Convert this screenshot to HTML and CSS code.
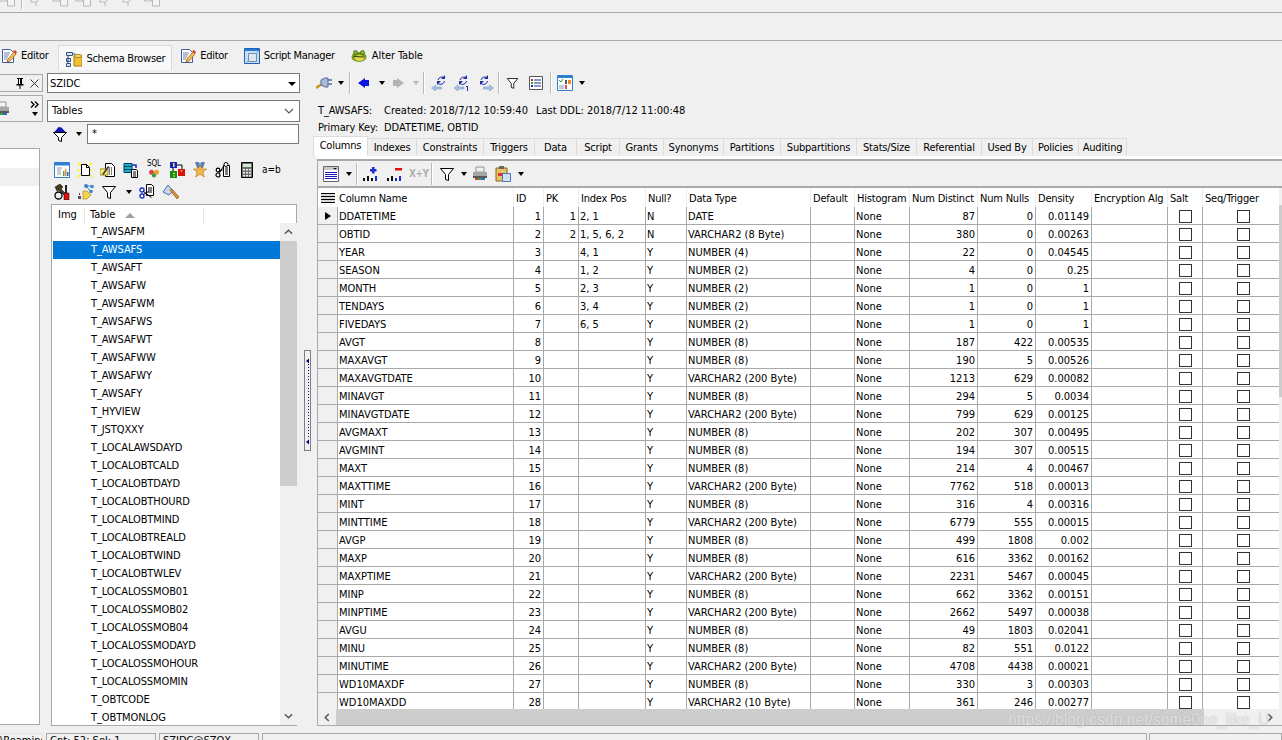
FILE: index.html
```html
<!DOCTYPE html>
<html lang="en">
<head>
<meta charset="utf-8">
<title>Schema Browser</title>
<link rel="stylesheet" href="styles.css">
</head>
<body>
<svg class="defs" xmlns="http://www.w3.org/2000/svg">
<symbol id="i-editor" viewBox="0 0 16 16"><path d="M1.500 1.500h8l3 3v10h-11z" fill="#fff" stroke="#3b5f9e"/><path d="M3 5h6M3 7h5M3 9h4M3 11h3" stroke="#6b7fb0"/><path d="M6 14l1-3 6-7 2 2-6 7z" fill="#f6c544" stroke="#a3542a" stroke-width=".8"/><path d="M12 3l2-1 2 2-1 2z" fill="#d8433c"/></symbol>
<symbol id="i-schema" viewBox="0 0 16 16"><path d="M.5 1.500h6v3h-6zM.5 7.500h4v3h-4zM.5 12.500h4v3h-4z" fill="#dce6f5" stroke="#34507f"/><path d="M6.500 3h3M2 4.500v8" stroke="#34507f" fill="none"/><path d="M8 5h8v10h-8z" fill="#f3c233" stroke="#a67d12"/><ellipse cx="12" cy="5" rx="4" ry="1.500" fill="#fbe58a" stroke="#a67d12"/></symbol>
<symbol id="i-script" viewBox="0 0 16 16"><path d="M.5.5h15v15h-15z" fill="#c9ddf2" stroke="#1d62b5"/><path d="M1 1h14v2h-14z" fill="#2b7bd2"/><path d="M4.500 5.500h8v8h-8z" fill="#dfe8f2" stroke="#6f8fb3"/><path d="M2.500 14.500l2-2M12.500 5.500l2-2" stroke="#6f8fb3"/></symbol>
<symbol id="i-toad" viewBox="0 0 16 16"><ellipse cx="8" cy="9" rx="7.500" ry="5" fill="#6f9a1e"/><ellipse cx="8.500" cy="10" rx="5" ry="3" fill="#e4d84c"/><circle cx="4.500" cy="4.500" r="2" fill="#8bb52a" stroke="#3d5b0f" stroke-width=".7"/><circle cx="11.500" cy="4.500" r="2" fill="#8bb52a" stroke="#3d5b0f" stroke-width=".7"/><path d="M3 8.500l10 .5" stroke="#2c430a"/></symbol>
<symbol id="i-print" viewBox="0 0 16 16"><path d="M4 1h8v5h-8z" fill="#f4f4f4" stroke="#8f8f8f"/><path d="M1 6h14v6h-14z" fill="#a6a6a6"/><path d="M1 10h14v2h-14z" fill="#595959"/><path d="M3 12h3v2h-3z" fill="#d33"/><path d="M6 12h3v2h-3z" fill="#3a3"/><path d="M9 12h4v2h-4z" fill="#36c"/></symbol>
<symbol id="i-pin" viewBox="0 0 8 11"><path d="M1 0h6v1h-1v5h1.500v1.500h-3v3.500h-1v-3.500h-3v-1.500h1.500v-5h-1z" fill="#000"/><path d="M3 1h1v5h-1z" fill="#fff"/></symbol>
<symbol id="i-close" viewBox="0 0 9 9"><path d="M.5.5l8 8M8.500.5l-8 8" stroke="#333"/></symbol>
<symbol id="i-chev2" viewBox="0 0 9 7"><path d="M1 .5l3 3-3 3M5 .5l3 3-3 3" fill="none" stroke="#000" stroke-width="1.300"/></symbol>
<symbol id="i-funnel" viewBox="0 0 16 16"><path d="M1.500 2.500h13l-5 6v6l-3-1v-5z" fill="#fff" stroke="#000"/></symbol>
<symbol id="i-funnelblue" viewBox="0 0 16 16"><path d="M1.500 6.500h13l-5 5v4l-3-1v-3z" fill="#fff" stroke="#000"/><path d="M2.500 6l4-5 3 .5 4 4.500z" fill="#1118b8"/></symbol>
<symbol id="i-chart" viewBox="0 0 16 16"><path d="M.5.5h15v15h-15z" fill="#fff" stroke="#2f7fd0"/><path d="M1 1h14v2.500h-14z" fill="#2f7fd0"/><path d="M3 6h5M3 8h4M3 10h4M3 12h4" stroke="#99a"/><path d="M9 9h1.500v5h-1.500z" fill="#4a4"/><path d="M11 7h1.500v7h-1.500z" fill="#e84"/><path d="M13 10h1.500v4h-1.500z" fill="#26c"/></symbol>
<symbol id="i-newdoc" viewBox="0 0 16 16"><path d="M1 1l2.500 2.500M15 1l-2.500 2.500M1 15l2.500-2.500M15 15l-2.500-2.500M0 8h2.500M16 8h-2.500M8 0v1" stroke="#fff200" stroke-width="1.500"/><path d="M4.500 2.500h5l3 3v8h-8z" fill="#fff" stroke="#000"/><path d="M9.500 2.500v3h3" fill="none" stroke="#000"/></symbol>
<symbol id="i-pendoc" viewBox="0 0 16 16"><path d="M5.500 1.500h6l3 3v10h-9z" fill="#fff" stroke="#000"/><path d="M7 6h6M7 8h6M7 10h6M7 12h6" stroke="#000" stroke-dasharray="1 1"/><path d="M0 7h8v6h-8z" fill="#fbef70" stroke="#9a8b1b"/><path d="M2 12l6-8 1.500 1-6 8z" fill="#444"/></symbol>
<symbol id="i-dbdoc" viewBox="0 0 16 16"><path d="M1 1.500h8v9h-8z" fill="#18b6c4" stroke="#053a66"/><path d="M1 4.500h8M1 7.500h8" stroke="#053a66"/><path d="M8.500 7.500h5l1 1v7h-6z" fill="#fff" stroke="#000"/><path d="M10 10h3M10 12h3M10 14h3" stroke="#000"/><path d="M9 3h4v3" fill="none" stroke="#1928b0" stroke-width="1.500"/></symbol>
<symbol id="i-sql" viewBox="0 0 16 12"><circle cx="5" cy="5" r="3" fill="#d44"/><circle cx="11" cy="5" r="3" fill="#e2a52d"/><circle cx="8" cy="9" r="2.500" fill="#3a9d3a"/></symbol>
<symbol id="i-blocks" viewBox="0 0 16 16"><path d="M1 0h7v6h-7z" fill="#1424c4"/><path d="M9 7h7v7h-7z" fill="#d81010"/><path d="M1 9h7v7h-7z" fill="#169016"/><path d="M8 3h5v4M4 6v3" fill="none" stroke="#000"/><path d="M4 1h1.500v4h-1.500zM11.500 8.500h2v1h-2zM4 11h2v1h-2zM4 13.500h2v1h-2z" fill="#ffe94a"/></symbol>
<symbol id="i-star" viewBox="0 0 16 16"><path d="M3 0h4l1 3 1-3h4l-2 6h-6z" fill="#5c7fb5"/><path d="M8 3l1.800 4h4.700l-3.700 3 1.400 5-4.200-3-4.200 3 1.400-5-3.700-3h4.700z" fill="#f5b648" stroke="#c27c18" stroke-width=".7"/></symbol>
<symbol id="i-scissdoc" viewBox="0 0 16 16"><path d="M8.500 3.500h6v11h-6z" fill="#fff" stroke="#000"/><path d="M10 6h3M10 8h3M10 10h3M10 12h3" stroke="#000"/><circle cx="3" cy="13" r="2" fill="#fff" stroke="#000" stroke-width="1.200"/><circle cx="3" cy="8" r="1.800" fill="#fff" stroke="#000" stroke-width="1.200"/><path d="M4 11.500l5-8M4.500 9l3-1" stroke="#000"/><circle cx="11" cy="2.500" r="2" fill="#fff" stroke="#000"/></symbol>
<symbol id="i-scissblue" viewBox="0 0 16 16"><path d="M7.500 .5h5l2 2v9h-7z" fill="#fff" stroke="#000"/><path d="M9 4h4M9 6h4M9 8h4" stroke="#000"/><circle cx="3" cy="6" r="2" fill="#fff" stroke="#1a2fd0" stroke-width="1.400"/><circle cx="3" cy="12" r="2" fill="#fff" stroke="#1a2fd0" stroke-width="1.400"/><path d="M4.500 7.500l8 6M4.500 10.500l5-3" stroke="#000"/></symbol>
<symbol id="i-calc" viewBox="0 0 12 16"><path d="M.5.500h11v15h-11z" fill="#6e6e6e" stroke="#000"/><path d="M2 2h8v3h-8z" fill="#cfe8cf"/><path d="M2 7h2v1.500h-2zM5 7h2v1.500h-2zM8 7h2v1.500h-2zM2 10h2v1.500h-2zM5 10h2v1.500h-2zM8 10h2v1.500h-2zM2 13h2v1.500h-2zM5 13h2v1.500h-2zM8 13h2v1.500h-2z" fill="#eee"/></symbol>
<symbol id="i-hammer" viewBox="0 0 16 16"><path d="M1 3l5-3 3 3-2 2 7 7h-3l-6-6-2 1z" fill="#4a3a1a" stroke="#000" stroke-width=".5"/><path d="M11 1h2v8h-2z" fill="#222"/><path d="M10 9h5v7h-5z" fill="#e01010" stroke="#000" stroke-width=".5"/><circle cx="4.500" cy="11.500" r="3.500" fill="none" stroke="#000" stroke-width="1.300"/></symbol>
<symbol id="i-net" viewBox="0 0 16 16"><path d="M5 7h4l4 4-4 4h-4z" fill="#f4d24a" stroke="#9a8010" stroke-width=".6"/><circle cx="8" cy="2" r="2" fill="#3c84c9"/><circle cx="14" cy="2.500" r="1.800" fill="#3c84c9"/><circle cx="13" cy="7.500" r="1.800" fill="#3c84c9"/><path d="M8 2h6M9 3l3 4" stroke="#3c84c9"/><path d="M1 9h1v2h-1zM0 12h3v3h-3z" fill="#555"/></symbol>
<symbol id="i-axe" viewBox="0 0 18 16"><path d="M1 8l5-7 5 6-4 4z" fill="#c5d6ee" stroke="#4f6fa8"/><path d="M8 6l2-1 7 8-2 2z" fill="#d8903a" stroke="#7d4a10" stroke-width=".6"/></symbol>
<symbol id="i-plug" viewBox="0 0 16 16"><path d="M0 13l6-4" stroke="#c99a1a" stroke-width="2.500"/><path d="M5 5l4-2h3v9h-3l-4-2z" fill="#a8bcd8" stroke="#4f6c9b"/><path d="M12 5h4M12 9h4" stroke="#4f6c9b" stroke-width="1.500"/></symbol>
<symbol id="i-left" viewBox="0 0 11 10"><path d="M0 5l7-5v2h4v6h-4v2z" fill="#0a14e0"/></symbol>
<symbol id="i-right" viewBox="0 0 11 10"><path d="M11 5l-7-5v2h-4v6h4v2z" fill="#b4b4b4"/></symbol>
<symbol id="i-refl" viewBox="0 0 16 16"><path d="M7 5a4 4 0 0 1 6.500-2M13.500 6a4 4 0 0 1-6.500 2.500" fill="none" stroke="#1c2ca8"/><path d="M14 0v4h-4zM6 10v-4h4z" fill="#1c2ca8"/><path d="M.5 13l4-3v2h6v2h-6v2z" fill="#a9c5e6" stroke="#6d8fb8" stroke-width=".5"/></symbol>
<symbol id="i-refr" viewBox="0 0 16 16"><path d="M3 5a4 4 0 0 1 6.500-2M9.500 6a4 4 0 0 1-6.500 2.500" fill="none" stroke="#1c2ca8"/><path d="M10 0v4h-4zM2 10v-4h4z" fill="#1c2ca8"/><path d="M15.500 13l-4-3v2h-6v2h6v2z" fill="#a9c5e6" stroke="#6d8fb8" stroke-width=".5"/></symbol>
<symbol id="i-ref1" viewBox="0 0 16 16"><path d="M6 5a4 4 0 0 1 6.500-2M12.500 6a4 4 0 0 1-6.500 2.500" fill="none" stroke="#1c2ca8"/><path d="M13 0v4h-4zM5 10v-4h4z" fill="#1c2ca8"/><path d="M0 13l4-3v2h6v2h-6v2z" fill="#a9c5e6" stroke="#6d8fb8" stroke-width=".5"/><path d="M12 11h2v5h-1v-4h-1z" fill="#1c2ca8"/></symbol>
<symbol id="i-list" viewBox="0 0 14 14"><path d="M.5.500h13v13h-13z" fill="#fff" stroke="#555"/><path d="M2 3h2v2h-2z" fill="#c22"/><path d="M2 6h2v2h-2z" fill="#2a2"/><path d="M2 9h2v2h-2z" fill="#22c"/><path d="M5 4h7M5 7h7M5 10h7" stroke="#11339a"/></symbol>
<symbol id="i-grid" viewBox="0 0 16 16"><path d="M.5.500h15v15h-15z" fill="#fff" stroke="#2f7fd0"/><path d="M1 1h14v2h-14z" fill="#2f7fd0"/><path d="M2 5l2 2 2-3" fill="none" stroke="#2a2"/><path d="M8 5h2v4h-2z" fill="#555"/><path d="M11 5h3v4h-3z" fill="#e88c2a"/><path d="M2 10h5v4h-5z" fill="#bcd"/><path d="M8 10h2v4h-2z" fill="#e44"/></symbol>
<symbol id="i-layout" viewBox="0 0 16 16"><path d="M.5.500h15v15h-15z" fill="#fff" stroke="#666"/><path d="M1 1h14v3h-14z" fill="#c8c8c8"/><path d="M10 2h4l-2 1.500z" fill="#000"/><path d="M2 6h12v1h-12zM2 8h12v1h-12zM2 10h12v1h-12zM2 12h12v1h-12z" fill="#1818b8"/></symbol>
<symbol id="i-addc" viewBox="0 0 16 16"><path d="M0 12h2v3h-2zM4 10h2v5h-2zM8 12h2v3h-2z" fill="#111"/><path d="M12 10h2v5h-2z" fill="#1a2fd0"/><path d="M9 1h2.500v2h2v2.500h-2v2h-2.500v-2h-2v-2.500h2z" fill="#1a2fd0"/></symbol>
<symbol id="i-delc" viewBox="0 0 16 16"><path d="M0 12h2v3h-2zM4 10h2v5h-2z" fill="#111"/><path d="M8 12h2v3h-2zM12 10h2v5h-2z" fill="#1a2fd0"/><path d="M8 2h7v2.500h-7z" fill="#e01010"/></symbol>
<symbol id="i-clip" viewBox="0 0 16 16"><path d="M1 2h11v13h-11z" fill="#e8c266" stroke="#8c6414"/><path d="M4 0h5v3h-5z" fill="#666"/><path d="M3 7h5v3h-5z" fill="#d33"/><path d="M7.500 7.500h8v8h-8z" fill="#cfe0f4" stroke="#4b79b8"/></symbol>
<symbol id="i-lines" viewBox="0 0 14 10"><path d="M0 .5h14M0 3.500h14M0 6.500h14M0 9.500h14" stroke="#000"/><path d="M0 2h14M0 5h14M0 8h14" stroke="#666" stroke-width=".5"/></symbol>
<symbol id="i-dis1" viewBox="0 0 16 12"><path d="M2 0v5h5l6-5M7 5v4" fill="none" stroke="#b8b8b8"/></symbol>
<symbol id="i-dis2" viewBox="0 0 16 12"><path d="M.5 0v4h7v-4M8.500 0v9h7v-9" fill="#f4f4f4" stroke="#b8b8b8"/></symbol>
<symbol id="i-grip" viewBox="0 0 5 99"><path d="M3.500 13v75" stroke="#00008b" stroke-dasharray="1 2"/><path d="M1 10l3-2.500v5zM1 91l3-2.500v5z" fill="#00008b"/></symbol>
</svg>

<div class="tools"><svg class="dis"><use href="#i-dis2"/></svg><span class="sep sep-top"></span><svg class="dis"><use href="#i-dis1"/></svg><svg class="dis"><use href="#i-dis2"/></svg><svg class="dis"><use href="#i-dis2"/></svg><svg class="dis"><use href="#i-dis1"/></svg><svg class="dis"><use href="#i-dis1"/></svg><svg class="dis"><use href="#i-dis2"/></svg></div>
<div class="blank"></div>
<nav class="wintabs">
  <span class="wt wt-edit"><svg class="ic"><use href="#i-editor"/></svg>Editor</span>
  <span class="wt on"><svg class="ic"><use href="#i-schema"/></svg>Schema Browser</span>
  <span class="wt"><svg class="ic"><use href="#i-editor"/></svg>Editor</span>
  <span class="wt"><svg class="ic"><use href="#i-script"/></svg>Script Manager</span>
  <span class="wt wt-alter"><svg class="ic"><use href="#i-toad"/></svg>Alter Table</span>
</nav>

<main class="main">
  <section class="tree">
    <div class="pinbar"><svg class="pin"><use href="#i-pin"/></svg><svg class="close"><use href="#i-close"/></svg></div>
    <div class="printbar"><svg class="ic"><use href="#i-print"/></svg><span class="chev"><svg class="chev2"><use href="#i-chev2"/></svg><i class="tri"></i></span></div>
    <div class="treebox"><div class="treerow"></div></div>
  </section>

  <section class="browser">
    <div class="combo combo-a"><span>SZIDC</span><i class="tri tri-b"></i></div>
    <div class="combo combo-b"><span>Tables</span><svg class="chevdown" viewBox="0 0 10 6"><path d="M1 1l4 4 4-4" fill="none" stroke="#555" stroke-width="1.200"/></svg></div>
    <div class="filter"><svg class="ic"><use href="#i-funnelblue"/></svg><i class="tri"></i><div class="input">*</div></div>
    <div class="iconrow first">
      <svg class="ic"><use href="#i-chart"/></svg><svg class="ic"><use href="#i-newdoc"/></svg><svg class="ic"><use href="#i-pendoc"/></svg><svg class="ic"><use href="#i-dbdoc"/></svg>
      <span class="sqlic"><b>SQL</b><svg class="mini"><use href="#i-sql"/></svg></span>
      <svg class="ic"><use href="#i-blocks"/></svg><svg class="ic"><use href="#i-star"/></svg><svg class="ic"><use href="#i-scissdoc"/></svg><svg class="calc"><use href="#i-calc"/></svg><span class="aeqb">a=b</span>
    </div>
    <div class="iconrow second">
      <svg class="ic"><use href="#i-hammer"/></svg><svg class="ic ml1"><use href="#i-net"/></svg><svg class="ic"><use href="#i-funnel"/></svg><i class="tri tri-m"></i><svg class="ic"><use href="#i-scissblue"/></svg><svg class="ic axe"><use href="#i-axe"/></svg>
    </div>
    <div class="listbox">
      <div class="listhead"><span class="lh-img">Img</span><span class="lh-table">Table<i class="tri-up"></i></span></div>
      <div class="listbody">
        <ul class="names">
          <li>T_AWSAFM</li><li class="sel">T_AWSAFS</li><li>T_AWSAFT</li><li>T_AWSAFW</li><li>T_AWSAFWM</li><li>T_AWSAFWS</li><li>T_AWSAFWT</li><li>T_AWSAFWW</li><li>T_AWSAFWY</li><li>T_AWSAFY</li><li>T_HYVIEW</li><li>T_JSTQXXY</li><li>T_LOCALAWSDAYD</li><li>T_LOCALOBTCALD</li><li>T_LOCALOBTDAYD</li><li>T_LOCALOBTHOURD</li><li>T_LOCALOBTMIND</li><li>T_LOCALOBTREALD</li><li>T_LOCALOBTWIND</li><li>T_LOCALOBTWLEV</li><li>T_LOCALOSSMOB01</li><li>T_LOCALOSSMOB02</li><li>T_LOCALOSSMOB04</li><li>T_LOCALOSSMODAYD</li><li>T_LOCALOSSMOHOUR</li><li>T_LOCALOSSMOMIN</li><li>T_OBTCODE</li><li>T_OBTMONLOG</li>
        </ul>
        <div class="vscroll"><span class="sb-up"><svg viewBox="0 0 10 6"><path d="M1 5l4-4 4 4" fill="none" stroke="#555" stroke-width="1.600"/></svg></span><span class="sb-thumb"></span><span class="sb-rest"></span><span class="sb-up"><svg viewBox="0 0 10 6"><path d="M1 1l4 4 4-4" fill="none" stroke="#555" stroke-width="1.600"/></svg></span></div>
      </div>
    </div>
  </section>

  <div class="splitter"><div class="grip"><svg class="gripline"><use href="#i-grip"/></svg></div></div>

  <section class="detail">
    <div class="dtools">
      <svg class="ic ml-1"><use href="#i-plug"/></svg><i class="tri ml6"></i><span class="sep ml5"></span>
      <svg class="nav ml7"><use href="#i-left"/></svg><i class="tri ml10"></i><svg class="nav ml8"><use href="#i-right"/></svg><i class="tri tri-g ml9"></i><span class="sep ml4"></span>
      <svg class="ic ml6"><use href="#i-refl"/></svg><svg class="ic ml7"><use href="#i-ref1"/></svg><svg class="ic ml8"><use href="#i-refr"/></svg><span class="sep ml4"></span>
      <svg class="fn ml6"><use href="#i-funnel"/></svg><svg class="lst ml10"><use href="#i-list"/></svg><span class="sep ml7"></span>
      <svg class="ic ml5"><use href="#i-grid"/></svg><i class="tri ml6"></i>
    </div>
    <div class="info"><p><span class="k1">T_AWSAFS:</span><span class="k2">Created: 2018/7/12 10:59:40</span><span>Last DDL: 2018/7/12 11:00:48</span></p><p><span class="k1">Primary Key:</span><span>DDATETIME, OBTID</span></p></div>
    <div class="tabs">
      <span class="tab active">Columns</span><span class="tab t2">Indexes</span><span class="tab t3">Constraints</span><span class="tab t4">Triggers</span><span class="tab t5">Data</span><span class="tab t6">Script</span><span class="tab t7">Grants</span><span class="tab t8">Synonyms</span><span class="tab t9">Partitions</span><span class="tab t10">Subpartitions</span><span class="tab t11">Stats/Size</span><span class="tab t12">Referential</span><span class="tab t13">Used By</span><span class="tab t14">Policies</span><span class="tab t15">Auditing</span>
    </div>
    <div class="subpanel">
      <div class="stools">
        <svg class="ic ml5"><use href="#i-layout"/></svg><i class="tri ml7"></i><span class="sep ml4"></span>
        <svg class="ic ml5"><use href="#i-addc"/></svg><svg class="ic ml8"><use href="#i-delc"/></svg><span class="xy ml6">X+Y</span><span class="sep ml6"></span>
        <svg class="ic ml6"><use href="#i-funnel"/></svg><i class="tri ml6"></i><svg class="ic ml5"><use href="#i-print"/></svg><svg class="ic ml7"><use href="#i-clip"/></svg><i class="tri ml7"></i>
      </div>
      <div class="gridwrap">
        <div class="gridclip">
        <table class="grid">
          <colgroup><col class="c0"><col class="c1"><col class="c2"><col class="c3"><col class="c4"><col class="c5"><col class="c6"><col class="c7"><col class="c8"><col class="c9"><col class="c10"><col class="c11"><col class="c12"><col class="c13"><col class="c14"></colgroup>
          <thead><tr><th class="rh"><svg class="lines"><use href="#i-lines"/></svg></th><th class="th-name">Column Name</th><th>ID</th><th>PK</th><th>Index Pos</th><th>Null?</th><th>Data Type</th><th>Default</th><th>Histogram</th><th>Num Distinct</th><th>Num Nulls</th><th>Density</th><th>Encryption Alg</th><th>Salt</th><th>Seq/Trigger</th></tr></thead>
          <tbody>
            <tr><td class="rh"><i class="cur"></i></td><td>DDATETIME</td><td class="n">1</td><td class="n">1</td><td>2, 1</td><td>N</td><td>DATE</td><td></td><td>None</td><td class="n">87</td><td class="n">0</td><td class="n">0.01149</td><td></td><td class="k"><i></i></td><td class="k"><i></i></td></tr>
            <tr><td class="rh"></td><td>OBTID</td><td class="n">2</td><td class="n">2</td><td>1, 5, 6, 2</td><td>N</td><td>VARCHAR2 (8 Byte)</td><td></td><td>None</td><td class="n">380</td><td class="n">0</td><td class="n">0.00263</td><td></td><td class="k"><i></i></td><td class="k"><i></i></td></tr>
            <tr><td class="rh"></td><td>YEAR</td><td class="n">3</td><td class="n"></td><td>4, 1</td><td>Y</td><td>NUMBER (4)</td><td></td><td>None</td><td class="n">22</td><td class="n">0</td><td class="n">0.04545</td><td></td><td class="k"><i></i></td><td class="k"><i></i></td></tr>
            <tr><td class="rh"></td><td>SEASON</td><td class="n">4</td><td class="n"></td><td>1, 2</td><td>Y</td><td>NUMBER (2)</td><td></td><td>None</td><td class="n">4</td><td class="n">0</td><td class="n">0.25</td><td></td><td class="k"><i></i></td><td class="k"><i></i></td></tr>
            <tr><td class="rh"></td><td>MONTH</td><td class="n">5</td><td class="n"></td><td>2, 3</td><td>Y</td><td>NUMBER (2)</td><td></td><td>None</td><td class="n">1</td><td class="n">0</td><td class="n">1</td><td></td><td class="k"><i></i></td><td class="k"><i></i></td></tr>
            <tr><td class="rh"></td><td>TENDAYS</td><td class="n">6</td><td class="n"></td><td>3, 4</td><td>Y</td><td>NUMBER (2)</td><td></td><td>None</td><td class="n">1</td><td class="n">0</td><td class="n">1</td><td></td><td class="k"><i></i></td><td class="k"><i></i></td></tr>
            <tr><td class="rh"></td><td>FIVEDAYS</td><td class="n">7</td><td class="n"></td><td>6, 5</td><td>Y</td><td>NUMBER (2)</td><td></td><td>None</td><td class="n">1</td><td class="n">0</td><td class="n">1</td><td></td><td class="k"><i></i></td><td class="k"><i></i></td></tr>
            <tr><td class="rh"></td><td>AVGT</td><td class="n">8</td><td class="n"></td><td></td><td>Y</td><td>NUMBER (8)</td><td></td><td>None</td><td class="n">187</td><td class="n">422</td><td class="n">0.00535</td><td></td><td class="k"><i></i></td><td class="k"><i></i></td></tr>
            <tr><td class="rh"></td><td>MAXAVGT</td><td class="n">9</td><td class="n"></td><td></td><td>Y</td><td>NUMBER (8)</td><td></td><td>None</td><td class="n">190</td><td class="n">5</td><td class="n">0.00526</td><td></td><td class="k"><i></i></td><td class="k"><i></i></td></tr>
            <tr><td class="rh"></td><td>MAXAVGTDATE</td><td class="n">10</td><td class="n"></td><td></td><td>Y</td><td>VARCHAR2 (200 Byte)</td><td></td><td>None</td><td class="n">1213</td><td class="n">629</td><td class="n">0.00082</td><td></td><td class="k"><i></i></td><td class="k"><i></i></td></tr>
            <tr><td class="rh"></td><td>MINAVGT</td><td class="n">11</td><td class="n"></td><td></td><td>Y</td><td>NUMBER (8)</td><td></td><td>None</td><td class="n">294</td><td class="n">5</td><td class="n">0.0034</td><td></td><td class="k"><i></i></td><td class="k"><i></i></td></tr>
            <tr><td class="rh"></td><td>MINAVGTDATE</td><td class="n">12</td><td class="n"></td><td></td><td>Y</td><td>VARCHAR2 (200 Byte)</td><td></td><td>None</td><td class="n">799</td><td class="n">629</td><td class="n">0.00125</td><td></td><td class="k"><i></i></td><td class="k"><i></i></td></tr>
            <tr><td class="rh"></td><td>AVGMAXT</td><td class="n">13</td><td class="n"></td><td></td><td>Y</td><td>NUMBER (8)</td><td></td><td>None</td><td class="n">202</td><td class="n">307</td><td class="n">0.00495</td><td></td><td class="k"><i></i></td><td class="k"><i></i></td></tr>
            <tr><td class="rh"></td><td>AVGMINT</td><td class="n">14</td><td class="n"></td><td></td><td>Y</td><td>NUMBER (8)</td><td></td><td>None</td><td class="n">194</td><td class="n">307</td><td class="n">0.00515</td><td></td><td class="k"><i></i></td><td class="k"><i></i></td></tr>
            <tr><td class="rh"></td><td>MAXT</td><td class="n">15</td><td class="n"></td><td></td><td>Y</td><td>NUMBER (8)</td><td></td><td>None</td><td class="n">214</td><td class="n">4</td><td class="n">0.00467</td><td></td><td class="k"><i></i></td><td class="k"><i></i></td></tr>
            <tr><td class="rh"></td><td>MAXTTIME</td><td class="n">16</td><td class="n"></td><td></td><td>Y</td><td>VARCHAR2 (200 Byte)</td><td></td><td>None</td><td class="n">7762</td><td class="n">518</td><td class="n">0.00013</td><td></td><td class="k"><i></i></td><td class="k"><i></i></td></tr>
            <tr><td class="rh"></td><td>MINT</td><td class="n">17</td><td class="n"></td><td></td><td>Y</td><td>NUMBER (8)</td><td></td><td>None</td><td class="n">316</td><td class="n">4</td><td class="n">0.00316</td><td></td><td class="k"><i></i></td><td class="k"><i></i></td></tr>
            <tr><td class="rh"></td><td>MINTTIME</td><td class="n">18</td><td class="n"></td><td></td><td>Y</td><td>VARCHAR2 (200 Byte)</td><td></td><td>None</td><td class="n">6779</td><td class="n">555</td><td class="n">0.00015</td><td></td><td class="k"><i></i></td><td class="k"><i></i></td></tr>
            <tr><td class="rh"></td><td>AVGP</td><td class="n">19</td><td class="n"></td><td></td><td>Y</td><td>NUMBER (8)</td><td></td><td>None</td><td class="n">499</td><td class="n">1808</td><td class="n">0.002</td><td></td><td class="k"><i></i></td><td class="k"><i></i></td></tr>
            <tr><td class="rh"></td><td>MAXP</td><td class="n">20</td><td class="n"></td><td></td><td>Y</td><td>NUMBER (8)</td><td></td><td>None</td><td class="n">616</td><td class="n">3362</td><td class="n">0.00162</td><td></td><td class="k"><i></i></td><td class="k"><i></i></td></tr>
            <tr><td class="rh"></td><td>MAXPTIME</td><td class="n">21</td><td class="n"></td><td></td><td>Y</td><td>VARCHAR2 (200 Byte)</td><td></td><td>None</td><td class="n">2231</td><td class="n">5467</td><td class="n">0.00045</td><td></td><td class="k"><i></i></td><td class="k"><i></i></td></tr>
            <tr><td class="rh"></td><td>MINP</td><td class="n">22</td><td class="n"></td><td></td><td>Y</td><td>NUMBER (8)</td><td></td><td>None</td><td class="n">662</td><td class="n">3362</td><td class="n">0.00151</td><td></td><td class="k"><i></i></td><td class="k"><i></i></td></tr>
            <tr><td class="rh"></td><td>MINPTIME</td><td class="n">23</td><td class="n"></td><td></td><td>Y</td><td>VARCHAR2 (200 Byte)</td><td></td><td>None</td><td class="n">2662</td><td class="n">5497</td><td class="n">0.00038</td><td></td><td class="k"><i></i></td><td class="k"><i></i></td></tr>
            <tr><td class="rh"></td><td>AVGU</td><td class="n">24</td><td class="n"></td><td></td><td>Y</td><td>NUMBER (8)</td><td></td><td>None</td><td class="n">49</td><td class="n">1803</td><td class="n">0.02041</td><td></td><td class="k"><i></i></td><td class="k"><i></i></td></tr>
            <tr><td class="rh"></td><td>MINU</td><td class="n">25</td><td class="n"></td><td></td><td>Y</td><td>NUMBER (8)</td><td></td><td>None</td><td class="n">82</td><td class="n">551</td><td class="n">0.0122</td><td></td><td class="k"><i></i></td><td class="k"><i></i></td></tr>
            <tr><td class="rh"></td><td>MINUTIME</td><td class="n">26</td><td class="n"></td><td></td><td>Y</td><td>VARCHAR2 (200 Byte)</td><td></td><td>None</td><td class="n">4708</td><td class="n">4438</td><td class="n">0.00021</td><td></td><td class="k"><i></i></td><td class="k"><i></i></td></tr>
            <tr><td class="rh"></td><td>WD10MAXDF</td><td class="n">27</td><td class="n"></td><td></td><td>Y</td><td>NUMBER (8)</td><td></td><td>None</td><td class="n">330</td><td class="n">3</td><td class="n">0.00303</td><td></td><td class="k"><i></i></td><td class="k"><i></i></td></tr>
            <tr><td class="rh"></td><td>WD10MAXDD</td><td class="n">28</td><td class="n"></td><td></td><td>Y</td><td>VARCHAR2 (10 Byte)</td><td></td><td>None</td><td class="n">361</td><td class="n">246</td><td class="n">0.00277</td><td></td><td class="k"><i></i></td><td class="k"><i></i></td></tr>
          </tbody>
        </table>
        </div>
        <div class="gridv"><span></span></div>
      </div>
      <div class="hscroll"><span class="hs-l"><svg viewBox="0 0 6 10"><path d="M5 1l-4 4 4 4" fill="none" stroke="#555" stroke-width="1.600"/></svg></span><span class="hs-thumb"></span><span class="hs-rest"></span><span class="hs-r"><svg viewBox="0 0 6 10"><path d="M1 1l4 4-4 4" fill="none" stroke="#555" stroke-width="1.600"/></svg></span></div>
    </div>
  </section>
</main>

<footer class="status">
  <span class="st st1">\Roaming</span><span class="st st2">Cnt: 52; Sel: 1</span><span class="st st3">SZIDC@SZQX</span><span class="st st4"></span><span class="st st5"></span>
</footer>
<div class="watermark">https://blog.csdn.net/some0ne_like_U</div>
</body>
</html>
```
FILE: styles.css
```css
* { box-sizing: border-box; }
html, body { margin: 0; height: 740px; overflow: hidden; }
body {
  position: relative;
  width: 1282px;
  background: #f0f0f0;
  color: #000;
  font-family: "DejaVu Sans", sans-serif;
  font-stretch: condensed;
  font-size: 11px;
  line-height: 14px;
}
p, ul { margin: 0; padding: 0; }
i { display: block; font-style: normal; }
.defs { display: none; }
.ic { width: 16px; height: 16px; flex: none; display: block; }

.ml-1 { margin-left: -1px; } .ml1 { margin-left: 1px; }
.ml4 { margin-left: 4px; } .ml5 { margin-left: 5px; } .ml6 { margin-left: 6px; } .ml7 { margin-left: 7px; }
.ml8 { margin-left: 8px; } .ml9 { margin-left: 9px; } .ml10 { margin-left: 10px; }

.tri { flex: none; width: 0; height: 0; border: 3px solid transparent; border-top: 4px solid #000; border-bottom: 0; }
.tri-g { border-top-color: #b4b4b4; }
.sep { flex: none; width: 2px; height: 22px; background: #b9b9b9; border-right: 1px solid #fff; }

.tools { height: 13px; display: flex; align-items: flex-end; gap: 8px; padding: 0 0 3px 0; border-bottom: 1px solid #a9a9a9; overflow: hidden; }
.dis { width: 16px; height: 12px; flex: none; margin-left: -1px; }
.dis + .sep-top + .dis { margin-left: 0; }
.sep-top { height: 12px; margin: 0 -2px 0 -2px; }
.blank { height: 28px; border-bottom: 1px solid #a9a9a9; }

.wintabs { height: 30px; display: flex; align-items: center; letter-spacing: -.3px; }
.wt { display: flex; align-items: center; gap: 4px; height: 25px; padding: 0 8px; white-space: nowrap; }
.wt-edit { margin-left: -7px; padding-right: 10px; }
.wt.on { background: #f8f8f8; border: 1px solid #d9d9d9; border-bottom: 0; padding: 2px 6px 0 7px; margin: 2px 0 0 0; height: 25px; }
.wt-alter { gap: 5px; padding-left: 8px; letter-spacing: -.1px; }

.main { height: 662px; display: flex; }

.tree { width: 47px; flex: none; padding-top: 3px; }
.pinbar { width: 44px; height: 18px; margin-left: -1px; border: 1px solid #a9a9a9; display: flex; align-items: center; justify-content: flex-end; gap: 6px; padding-right: 3px; }
.pin { width: 8px; height: 11px; }
.close { width: 9px; height: 9px; }
.printbar { width: 44px; height: 27px; margin: 3px 0 0 -1px; border: 1px solid #a9a9a9; display: flex; align-items: center; justify-content: space-between; padding-right: 3px; }
.printbar .ic { margin-left: -6px; }
.chev { display: flex; flex-direction: column; align-items: center; gap: 4px; }
.chev2 { width: 9px; height: 7px; display: block; }
.treebox { width: 41px; height: 577px; margin-top: 26px; margin-left: -1px; background: #fff; border: 1px solid #a9a9a9; padding-top: 19px; }
.treerow { height: 18px; background: #f0f0f0; }

.browser { width: 253px; flex: none; padding-top: 2px; }
.combo { width: 253px; background: #fff; border: 1px solid #7a7a7a; display: flex; align-items: center; justify-content: space-between; }
.combo-a { height: 20px; padding: 1px 3px 0 2px; }
.combo-b { height: 22px; margin-top: 7px; padding: 0 5px 0 4px; }
.tri-b { border-width: 4px; border-bottom: 0; }
.chevdown { width: 10px; height: 6px; }
.filter { display: flex; align-items: center; margin-top: 2px; height: 20px; padding-left: 5px; }
.filter .tri { margin-left: 8px; }
.input { flex: none; width: 212px; height: 20px; margin-left: 5px; background: #fff; border: 1px solid #7a7a7a; padding: 2px 4px; }
.iconrow { display: flex; align-items: center; height: 18px; margin-left: 7px; gap: 7px; }
.first { margin-top: 17px; }
.second { margin-top: 4px; }
.sqlic { width: 16px; flex: none; display: flex; flex-direction: column; align-items: center; margin-top: -2px; }
.sqlic b { font-size: 8px; line-height: 8px; font-weight: normal; }
.mini { width: 14px; height: 10px; }
.calc { width: 12px; height: 16px; flex: none; margin-left: 3px; }
.aeqb { margin-left: 2px; font-size: 10px; }
.tri-m { margin-left: 2px; }
.axe { width: 18px; }
.listbox { margin: 3px 0 0 4px; width: 246px; height: 522px; background: #fff; border: 1px solid #a9a9a9; }
.listhead { height: 18px; display: flex; align-items: center; padding-top: 2px; }
.lh-img { width: 32px; padding-left: 6px; }
.lh-table { display: flex; align-items: center; gap: 10px; width: 120px; padding-left: 5px; height: 15px; border-left: 1px solid #e3e3e3; border-right: 1px solid #e3e3e3; }
.tri-up { width: 0; height: 0; border: 5px solid transparent; border-bottom: 5px solid #a0a0a0; border-top: 0; }
.listbody { display: flex; height: 502px; padding-left: 1px; }
.names { flex: none; width: 227px; list-style: none; overflow: hidden; }
.names li { height: 18px; line-height: 18px; padding-left: 38px; white-space: nowrap; letter-spacing: -.1px; }
.names .sel { background: #0078d7; color: #fff; }
.vscroll { width: 17px; flex: none; display: flex; flex-direction: column; background: #f0f0f0; }
.sb-up { height: 18px; display: flex; align-items: center; justify-content: center; }
.sb-up svg { width: 9px; height: 6px; }
.sb-thumb { height: 245px; background: #cdcdcd; }
.sb-rest { flex: 1; }

.splitter { width: 17px; flex: none; display: flex; align-items: flex-start; }
.grip { width: 7px; height: 101px; margin: 279px 0 0 4px; border: 1px solid #808080; }
.gripline { display: block; width: 5px; height: 99px; }

.detail { flex: 1; min-width: 0; }
.dtools { display: flex; align-items: center; height: 24px; }
.nav { width: 11px; height: 10px; flex: none; }
.fn { width: 13px; height: 14px; flex: none; }
.lst { width: 14px; height: 14px; flex: none; }
.info { margin-top: 7px; padding-left: 1px; }
.info p { height: 17px; line-height: 17px; display: flex; }
.k1 { width: 66px; flex: none; letter-spacing: -.15px; }
.k2 { width: 152px; flex: none; }
.tabs { display: flex; align-items: flex-end; height: 20px; margin-left: -4px; letter-spacing: -.2px; }
.tab { height: 18px; line-height: 17px; text-align: center; background: #f0f0f0; border: 1px solid #dcdcdc; border-width: 1px 1px 0 0; white-space: nowrap; flex: none; }
.tab.active { height: 20px; width: 55px; background: #fff; line-height: 18px; border-width: 1px 1px 0 1px; }
.t2 { width: 49px; } .t3 { width: 67px; } .t4 { width: 51px; } .t5 { width: 42px; } .t6 { width: 43px; } .t7 { width: 44px; } .t8 { width: 60px; }
.t9 { width: 57px; } .t10 { width: 76px; } .t11 { width: 60px; } .t12 { width: 65px; } .t13 { width: 51px; } .t14 { width: 46px; } .t15 { width: 48px; }
.subpanel { background: #f0f0f0; border-top: 3px solid #fff; }
.stools { height: 29px; border-top: 2px solid #a9a9a9; border-bottom: 2px solid #a9a9a9; border-left: 1px solid #a9a9a9; display: flex; align-items: center; }
.xy { color: #b0b0b0; font-weight: bold; font-size: 10px; width: 16px; flex: none; letter-spacing: -.5px; white-space: nowrap; }

.gridwrap { height: 521px; display: flex; border-left: 1px solid #a9a9a9; background: #fff; overflow: hidden; }
.gridclip { width: 961px; flex: none; overflow: hidden; }
.grid { table-layout: fixed; width: 967px; border-collapse: separate; border-spacing: 0; }
.c0 { width: 20px; } .c1 { width: 176px; } .c2 { width: 30px; } .c3 { width: 35px; } .c4 { width: 67px; }
.c5 { width: 41px; } .c6 { width: 124px; } .c7 { width: 44px; } .c8 { width: 55px; } .c9 { width: 68px; }
.c10 { width: 58px; } .c11 { width: 56px; } .c12 { width: 76px; } .c13 { width: 35px; } .c14 { width: 82px; }
.grid th { height: 19px; padding: 2px 0 0 2px; font-weight: normal; text-align: left; white-space: nowrap; overflow: hidden; background: #fff; border-right: 1px solid #eee; letter-spacing: -.2px; }
.grid .th-name { padding-left: 1px; }
.grid td { height: 18px; padding: 2px 2px 0 1px; white-space: nowrap; overflow: hidden; border-right: 1px solid #a9a9a9; border-bottom: 1px solid #a9a9a9; line-height: 15px; }
.grid th.rh { padding: 0; background: #fff; }
.grid td.rh { background: #f0f0f0; padding: 0; }
.lines { display: block; width: 14px; height: 10px; margin: 0 0 0 3px; }
.cur { width: 0; height: 0; margin-left: 7px; border: 4.500px solid transparent; border-left: 6px solid #000; border-right: 0; }
.grid td.n { text-align: right; padding-right: 2px; }
.grid td.k { padding: 0; }
.k i { width: 13px; height: 13px; margin: 1px auto 0; border: 1px solid #333; background: #fff; }
.gridv { flex: 1; background: #f0f0f0; padding-top: 17px; }
.gridv span { display: block; height: 192px; background: #cdcdcd; }

.hscroll { height: 17px; display: flex; border-left: 1px solid #a9a9a9; border-bottom: 1px solid #a9a9a9; }
.hs-l { width: 18px; display: flex; align-items: center; justify-content: center; }
.hs-l svg, .hs-r svg { width: 6px; height: 9px; }
.hs-thumb { width: 868px; background: #cdcdcd; }
.hs-rest { flex: 1; }
.hs-r { width: 24px; display: flex; align-items: center; justify-content: center; }

.status { height: 7px; display: flex; gap: 3px; overflow: hidden; }
.st { height: 16px; border: 1px solid #a9a9a9; padding: 0 3px; white-space: nowrap; overflow: hidden; }
.st1 { width: 43px; text-align: right; border-left: 0; border-color: #e3e3e3; padding: 0; }
.st2 { width: 110px; }
.st3 { width: 100px; }
.st4 { flex: 1; }
.st5 { width: 133px; margin-left: -1px; }

.watermark { position: absolute; left: 1008px; top: 710px; font-family: "Liberation Sans", sans-serif; font-stretch: normal; font-size: 15.700px; line-height: 20px; white-space: nowrap; color: rgba(255,255,255,.62); text-shadow: 0 0 1px rgba(130,130,130,.55); }
```
